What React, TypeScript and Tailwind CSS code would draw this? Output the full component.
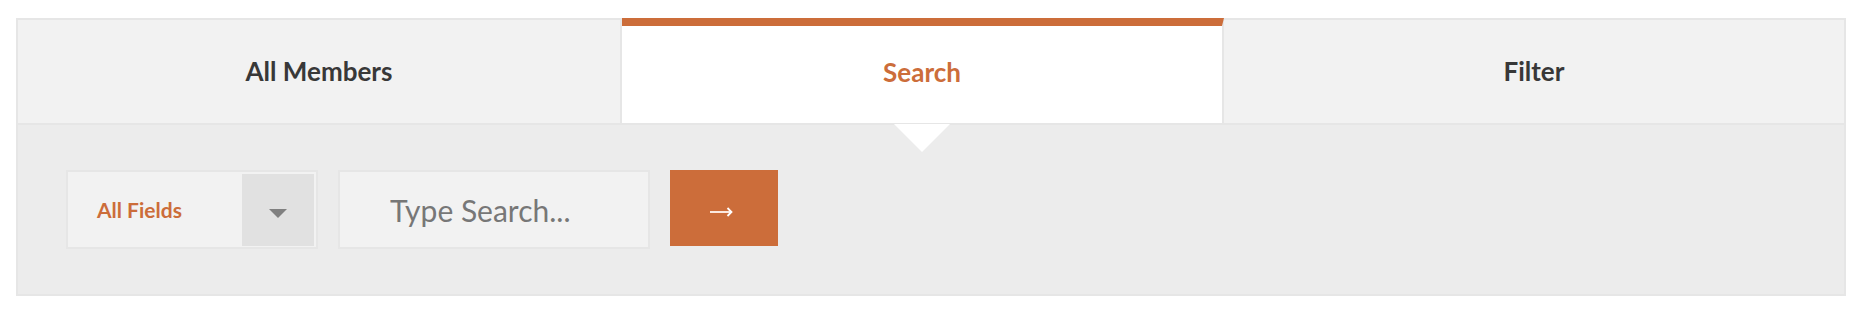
import React from "react";

export default function App() {
  return (
    <div className="min-h-[320px] w-[1864px] bg-white pt-[18px] pl-[16px] font-['Lato',sans-serif]">
      <div className="w-[1830px] border-2 border-[#e6e6e6]">
        {/* Tabs */}
        <div className="flex h-[105px] border-b-2 border-[#e6e6e6] bg-[#f2f2f2]">
          <div className="flex w-[604px] items-center justify-center border-r-2 border-[#e6e6e6] text-[26px] font-bold text-[#383838]">
            All Members
          </div>
          <div className="relative -mt-[2px] flex w-[602px] items-center justify-center border-t-[8px] border-r-2 border-t-[#cc6d3a] border-r-[#e6e6e6] bg-white text-[26px] font-bold text-[#cc6d3a]">
            <span className="-mt-[5px]">Search</span>
            <div className="absolute left-1/2 top-full h-0 w-0 -translate-x-1/2 translate-y-[1px] border-l-[28px] border-r-[28px] border-t-[28px] border-l-transparent border-r-transparent border-t-white" />
          </div>
          <div className="flex flex-1 items-center justify-center text-[26px] font-bold text-[#383838]">
            Filter
          </div>
        </div>
        {/* Panel */}
        <div className="flex h-[169px] items-start gap-[20px] bg-[#ececec] pl-[48px] pt-[45px]">
          <div className="flex h-[79px] w-[252px] items-start border-2 border-[#e6e6e6] bg-[#f2f2f2]">
            <div className="flex h-[75px] flex-1 items-center pl-[29px] pt-[1px] text-[21px] font-bold text-[#cc6d3a]">
              All Fields
            </div>
            <div className="mt-[2px] mr-[2px] flex h-[72px] w-[72px] justify-center bg-[#e1e1e1] pt-[35px]">
              <svg width="18" height="9" viewBox="0 0 18 9">
                <polygon points="0,0 18,0 9,9" fill="#808080" />
              </svg>
            </div>
          </div>
          <div className="h-[79px] w-[312px] border-2 border-[#e6e6e6] bg-[#f2f2f2]">
            <input
              type="text"
              placeholder="Type Search..."
              className="h-full w-full bg-transparent pl-[50px] text-[30px] text-[#555] outline-none placeholder:text-[#777]"
            />
          </div>
          <button className="flex h-[76px] w-[108px] items-center justify-center bg-[#cc6d3a] pr-[5px] pt-[8px]">
            <svg width="23" height="10" viewBox="0 0 23 10">
              <line x1="0" y1="5" x2="21" y2="5" stroke="#fbe9df" strokeWidth="2" />
              <polyline points="17.5,1 21.5,5 17.5,9" fill="none" stroke="#ffffff" strokeWidth="1.8" />
            </svg>
          </button>
        </div>
      </div>
    </div>
  );
}
